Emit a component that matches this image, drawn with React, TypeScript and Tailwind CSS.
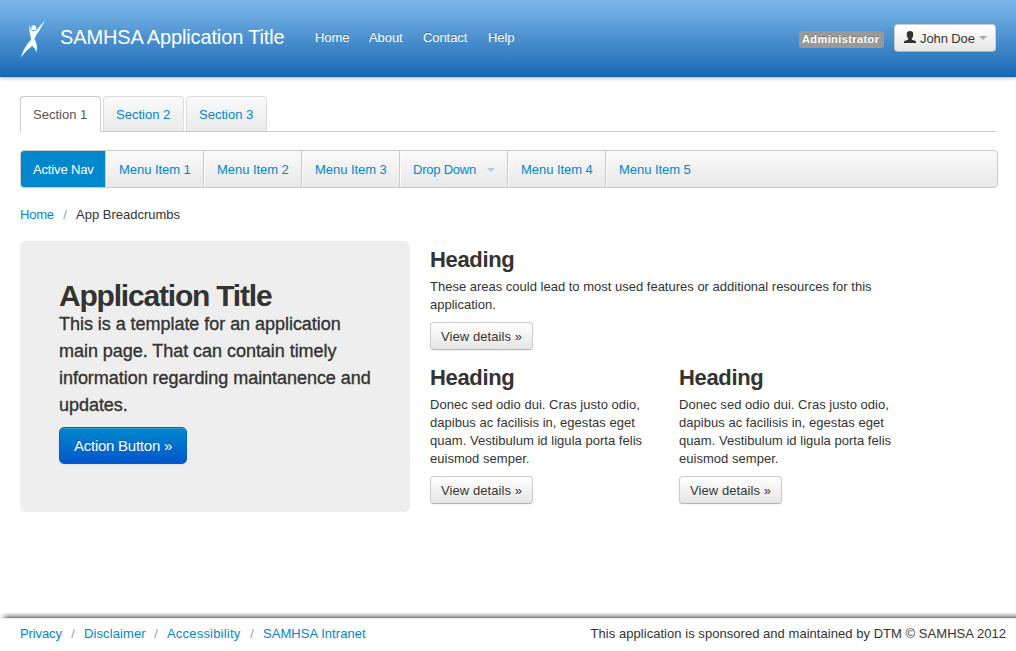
import React from "react";

const link = "text-[#0088cc]";
const btn =
  "inline-flex h-7 items-center rounded border border-[#cccccc] border-b-[#b3b3b3] bg-linear-to-b from-white to-[#e6e6e6] pt-px whitespace-nowrap shadow-[inset_0_1px_0_rgba(255,255,255,.2),0_1px_2px_rgba(0,0,0,.05)] [text-shadow:0_1px_1px_rgba(255,255,255,.75)]";

function Logo() {
  return (
    <svg className="mt-[18px] h-10 w-[27px] shrink-0" viewBox="0 0 27 40" fill="white">
      <path
        stroke="#3fc3f7"
        strokeWidth=".7"
        d="M25.7 1.3 18.8 13.5Q15.8 17 14.4 20.8Q18 27 16.6 34.7Q15 30 12.2 28Q7 31.5 .7 39.6Q3.5 30 11.2 21.2Q9.2 15 9.2 6.5L11.2 12Q14 14.3 17 11.5Z"
      />
      <path d="M24.5 3.2 18.5 13.4Q15.4 17 14.2 20.8Q17.4 26 16.6 32.5Q14.8 29 12.2 27.6Q7 31 1.6 38Q4.5 29.5 11.5 21.2Q9.6 16 9.4 8L11.2 12.3Q14 14.5 17 11.9Z" />
      <circle cx="13.8" cy="9.7" r="2.5" />
    </svg>
  );
}

function Caret({ className }: { className: string }) {
  return <span className={`inline-block border-x-4 border-t-4 border-x-transparent ${className}`} />;
}

function Header() {
  return (
    <header className="flex h-[77px] shrink-0 items-start border-b border-[#1460a5] bg-linear-to-b from-[#7cb8e8] to-[#126ab5] pl-5 text-white shadow-[0_1px_4px_rgba(0,0,0,.3)]">
      <Logo />
      <h1 className="mt-[27px] ml-[13px] w-[255px] text-xl leading-5 tracking-[-0.14px] whitespace-nowrap">SAMHSA Application Title</h1>
      <nav className="mt-[29px] flex leading-[18px] tracking-[-0.08px] [text-shadow:0_-1px_0_rgba(0,0,0,.25)]">
        <a className="w-[54px]">Home</a>
        <a className="w-[54px]">About</a>
        <a className="w-[65px]">Contact</a>
        <a>Help</a>
      </nav>
      <div className="mt-6 mr-5 ml-auto flex">
        <span className="mt-[7px] mr-2.5 flex h-[17px] w-[85px] items-center rounded-[3px] bg-[#999999] pl-[3px] text-[11px] leading-none font-bold tracking-[0.4px] whitespace-nowrap [text-shadow:0_-1px_0_rgba(0,0,0,.25)]">Administrator</span>
        <button className={`${btn} w-[102px] pl-[9px] text-[#333333]`}>
          <svg className="mr-1 mb-[3px] h-3 w-3 shrink-0" viewBox="0 0 12 12" fill="#333">
            <path d="M2.8 2.8Q2.8 0 6 0Q9.2 0 9.2 2.8V4.2Q9.2 6.2 7.8 7.4V8.6L12 10.2V12H0V10.2L4.2 8.6V7.4Q2.8 6.2 2.8 4.2Z" />
          </svg>
          <span className="w-[55px] text-left tracking-[-0.1px]">John Doe</span>
          <Caret className="mb-px ml-1 border-t-[#aaaaaa]" />
        </button>
      </div>
    </header>
  );
}

function Tabs() {
  return (
    <div className="mr-5 ml-5 flex h-9 gap-0.5 border-b border-[#cccccc]">
      <a className="h-9 w-[81px] rounded-t border border-b-0 border-[#cccccc] bg-white pl-3 leading-9 text-[#555555]">Section 1</a>
      <a className={`h-[35px] w-[81px] rounded-t border border-b-0 border-[#dddddd] bg-linear-to-b from-[#fafafa] to-[#eaeaea] pl-3 leading-9 ${link}`}>Section 2</a>
      <a className={`h-[35px] w-[81px] rounded-t border border-b-0 border-[#dddddd] bg-linear-to-b from-[#fafafa] to-[#eaeaea] pl-3 leading-9 ${link}`}>Section 3</a>
    </div>
  );
}

function MenuBar() {
  const cell = "h-9 border-r border-r-[#cccccc] border-l border-l-[#fbfbfb] pl-3 w-[98px]";
  return (
    <nav className={`mt-[18px] ml-5 flex h-[38px] w-[978px] overflow-hidden rounded border border-[#cccccc] bg-linear-to-b from-[#fafafa] to-[#e8e8e8] leading-[37px] tracking-[-0.05px] ${link}`}>
      <a className="h-9 w-[85px] border-r border-[#cccccc] bg-[#0088cc] pl-3 tracking-[-0.15px] text-white">Active Nav</a>
      <a className={cell}>Menu Item 1</a>
      <a className={cell}>Menu Item 2</a>
      <a className={cell}>Menu Item 3</a>
      <a className="flex h-9 w-[108px] items-center border-r border-l border-r-[#cccccc] border-l-[#fbfbfb] pl-3">
        <span className="w-[74px] tracking-[-0.22px]">Drop Down</span>
        <Caret className="mt-0.5 border-t-[#a3cfe8]" />
      </a>
      <a className={cell}>Menu Item 4</a>
      <a className="h-9 border-l border-[#fbfbfb] pl-3">Menu Item 5</a>
    </nav>
  );
}

function Slash() {
  return <span className="w-[22px] text-center text-[#999999]">/</span>;
}

function Details() {
  return <a className={`${btn} w-[103px] pl-2.5 tracking-[0.08px]`}>View details »</a>;
}

function Heading() {
  return <h2 className="pt-px text-[22px] leading-9 font-bold tracking-[-0.35px]">Heading</h2>;
}

function Blurb() {
  return (
    <section className="w-[249px]">
      <Heading />
      <p className="mb-2 tracking-[0.03px] whitespace-nowrap">
        Donec sed odio dui. Cras justo odio,
        <br />
        dapibus ac facilisis in, egestas eget
        <br />
        quam. Vestibulum id ligula porta felis
        <br />
        euismod semper.
      </p>
      <Details />
    </section>
  );
}

function Hero() {
  return (
    <section className="h-[271px] w-[390px] shrink-0 rounded-md bg-[#eeeeee] pt-10 pl-[39px]">
      <h1 className="text-[30px] leading-[30px] font-bold tracking-[-1.2px]">Application Title</h1>
      <p className="text-lg leading-[27px] tracking-[-0.04px] whitespace-nowrap [-webkit-text-stroke:0.35px_#333]">
        This is a template for an application
        <br />
        main page. That can contain timely
        <br />
        information regarding maintanence and
        <br />
        updates.
      </p>
      <a className="mt-2 flex h-[37px] w-32 items-center rounded-[5px] border border-[#0064b4] bg-linear-to-b from-[#0088cc] to-[#0055cc] pl-3.5 text-[15px] tracking-[-0.25px] text-white shadow-[inset_0_1px_0_rgba(255,255,255,.2),0_1px_2px_rgba(0,0,0,.05)] [text-shadow:0_-1px_0_rgba(0,0,0,.25)]">
        Action Button »
      </a>
    </section>
  );
}

export default function App() {
  return (
    <div className="flex h-[651px] w-[1016px] flex-col overflow-hidden bg-white font-['Liberation_Sans',Arial,sans-serif] text-[13px] leading-[18px] text-[#333333]">
      <Header />
      <main className="pt-[19px]">
        <Tabs />
        <MenuBar />
        <div className="mt-[18px] ml-5 flex">
          <a className={`w-[34px] tracking-[-0.2px] ${link}`}>Home</a>
          <Slash />
          <span>App Breadcrumbs</span>
        </div>
        <div className="mt-[17px] ml-5 flex gap-5">
          <Hero />
          <div>
            <section className="mb-2">
              <Heading />
              <p className="mb-2 whitespace-nowrap">
                These areas could lead to most used features or additional resources for this
                <br />
                application.
              </p>
              <Details />
            </section>
            <div className="flex pt-px">
              <Blurb />
              <Blurb />
            </div>
          </div>
        </div>
      </main>
      <footer className="mt-auto">
        <div className="h-[6px] bg-linear-to-b from-white via-[#cccccc] to-[#808080] [mask-image:linear-gradient(to_right,transparent,black_8px)]" />
        <div className="flex h-[33px] items-start border-t border-[#eeeeee] pt-[6px] pr-2.5 pl-5">
          <a className={`w-[42px] tracking-[-0.1px] ${link}`}>Privacy</a>
          <Slash />
          <a className={`w-[61px] tracking-[0.1px] ${link}`}>Disclaimer</a>
          <Slash />
          <a className={`w-[74px] tracking-[0.2px] ${link}`}>Accessibility</a>
          <Slash />
          <a className={`tracking-[0.05px] ${link}`}>SAMHSA Intranet</a>
          <span className="ml-auto tracking-[0.04px]">This application is sponsored and maintained by DTM © SAMHSA 2012</span>
        </div>
      </footer>
    </div>
  );
}
